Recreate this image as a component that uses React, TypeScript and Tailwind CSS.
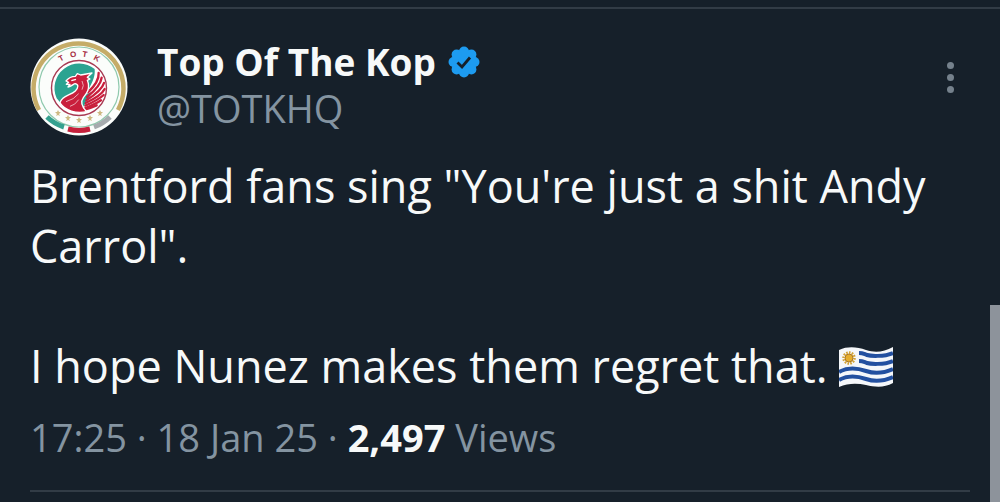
import React from 'react';

const Avatar: React.FC = () => (
  <svg viewBox="0 0 98 98" className="size-[98px] shrink-0" role="img" aria-label="Top Of The Kop">
    <circle cx="49" cy="49" r="48.5" fill="#fbfdfb" />
    {/* gold outer band */}
    <path d="M9 72 A45 45 0 1 1 88 72" fill="none" stroke="#c5ac68" strokeWidth="4.5" />
    <circle cx="49" cy="49" r="40" fill="none" stroke="#8fc9ad" strokeWidth="1.2" />
    {/* lower segments */}
    <path d="M17 79 A44 44 0 0 0 34 89" fill="none" stroke="#35a18f" strokeWidth="5" />
    <path d="M38 91 A44 44 0 0 0 60 91" fill="none" stroke="#c5203b" strokeWidth="5" />
    <path d="M64 89 A44 44 0 0 0 80 79" fill="none" stroke="#a6abae" strokeWidth="5" />
    {/* wordmark */}
    <g fill="#a52a40" fontFamily="Liberation Sans, sans-serif" fontWeight="700" fontSize="8" textAnchor="middle">
      <text x="31" y="23" transform="rotate(-28 31 20)">T</text>
      <text x="43" y="19" transform="rotate(-9 43 16)">O</text>
      <text x="55" y="19" transform="rotate(9 55 16)">T</text>
      <text x="67" y="23" transform="rotate(28 67 20)">K</text>
    </g>
    <circle cx="49" cy="50" r="27.5" fill="#fff" stroke="#a83a53" strokeWidth="1.4" />
    <g transform="scale(.3333) translate(-28 -27)">
      <path d="M108 208 A74 74 0 0 1 222 120 C224 142 216 158 206 176 L196 196 L216 188 L186 236 L120 222 Z" fill="#2ba391" />
      {/* wing feathers */}
      <g fill="none" stroke="#c91f3c" strokeWidth="7" strokeLinecap="round">
        <path d="M234 132 Q236 158 202 190" />
        <path d="M243 146 Q240 172 199 204" />
        <path d="M250 162 Q244 184 197 214" />
        <path d="M252 180 Q242 200 195 222" />
        <path d="M249 198 Q234 212 194 230" />
        <path d="M241 214 Q224 226 194 237" />
        <path d="M228 229 Q212 236 192 242" />
      </g>
      {/* neck, head and crest */}
      <path
        d="M118 222 C122 200 150 200 164 186 C174 176 174 166 164 164 C158 164 154 172 142 174 L148 166 L137 166 L144 160 L136 156 C144 146 152 142 164 142 L170 134 L180 138 L214 132 L200 145 L208 150 L200 154 C210 178 198 194 188 206 C178 220 182 232 198 248 C166 254 134 246 118 222 Z"
        fill="#c91f3c"
        stroke="#fff"
        strokeWidth="4"
        strokeLinejoin="round"
      />
      <path d="M152 155 L166 151" stroke="#fff" strokeWidth="4" />
      <path d="M136 218 Q160 212 174 194 M148 232 Q164 228 174 212 M184 156 Q192 170 184 182" fill="none" stroke="#eba9b4" strokeWidth="3" />
    </g>
    {/* stars */}
    <g fill="#cdb982">
      <path d="M28 72l1 2h2l-2 2 1 2-2-1-2 1 1-2-2-2h2z" />
      <path d="M38 77l1 2h2l-2 2 1 2-2-1-2 1 1-2-2-2h2z" />
      <path d="M49 79l1 2h2l-2 2 1 2-2-1-2 1 1-2-2-2h2z" />
      <path d="M60 77l1 2h2l-2 2 1 2-2-1-2 1 1-2-2-2h2z" />
      <path d="M70 72l1 2h2l-2 2 1 2-2-1-2 1 1-2-2-2h2z" />
    </g>
  </svg>
);

const VerifiedBadge: React.FC = () => (
  <svg viewBox="0 0 32 32" className="size-8 shrink-0" role="img" aria-label="Verified">
    <g fill="#1d9bf0">
      <circle cx="16" cy="16" r="12.5" />
      <circle cx="16" cy="5.5" r="5" />
      <circle cx="23.4" cy="8.6" r="5" />
      <circle cx="26.5" cy="16" r="5" />
      <circle cx="23.4" cy="23.4" r="5" />
      <circle cx="16" cy="26.5" r="5" />
      <circle cx="8.6" cy="23.4" r="5" />
      <circle cx="5.5" cy="16" r="5" />
      <circle cx="8.6" cy="8.6" r="5" />
    </g>
    <path d="M9.5 16.5 L14 21 L22 11.5" fill="none" stroke="#16202a" strokeWidth="2.8" />
  </svg>
);

const UruguayFlag: React.FC = () => (
  <svg viewBox="0 0 54 40" className="inline-block w-[54px] h-10 align-[-4px]" role="img" aria-label="Uruguay">
    <path d="M0 3 C9 -1 18 0 27 3 S45 5 54 0 V36 C45 41 36 40 27 38 S9 36 0 40 Z" fill="#f5f7fa" />
    <g fill="none" stroke="#2350a0" strokeWidth="4">
      <path d="M20 6 C24 6 25 7 28 8 S45 10 54 6" />
      <path d="M20 14 C24 14 25 15 28 16 S45 18 54 14" />
      <path d="M0 25 C9 20 18 21 27 24 S45 26 54 22" />
      <path d="M0 33 C9 28 18 29 27 32 S45 34 54 30" />
    </g>
    <circle cx="10" cy="11" r="5.5" fill="none" stroke="#d3a233" strokeWidth="2.5" strokeDasharray="1.6 1.2" />
    <circle cx="10" cy="11" r="4" fill="#e5ad2d" stroke="#a9792a" strokeWidth="1" />
  </svg>
);

const MoreButton: React.FC = () => (
  <button type="button" aria-label="More" className="flex w-10 shrink-0 flex-col items-center gap-[5px] pt-6">
    <span className="size-[7px] rounded-full bg-[#75818c]" />
    <span className="size-[7px] rounded-full bg-[#75818c]" />
    <span className="size-[7px] rounded-full bg-[#75818c]" />
  </button>
);

const App: React.FC = () => {
  return (
    <div className="flex min-h-screen flex-col bg-[#16202a] font-['Open_Sans','Noto_Sans',sans-serif] text-[#f7f9f9]">
      <div className="flex flex-1 border-t-7 border-[#16202a]">
        <main className="min-w-0 flex-1 -mr-[10px] border-t-2 border-[#323c46]">
          <article className="px-[30px] pt-[29px]">
            <header className="flex items-start">
              <Avatar />
              <div className="ml-[29px] min-w-0 flex-1">
                <div className="flex items-center gap-3">
                  <h1 className="text-[37px] font-bold leading-[48px]">Top Of The Kop</h1>
                  <VerifiedBadge />
                </div>
                <a href="#profile" className="block text-[38px] leading-[44px] text-[#8494a1]">@TOTKHQ</a>
              </div>
              <MoreButton />
            </header>
            <div className="mt-5 text-[45px] leading-[60px]">
              <p>Brentford fans sing "You're just a shit Andy Carrol".</p>
              <p className="mt-[60px]">
                I hope Nunez makes them regret that. <UruguayFlag />
              </p>
            </div>
            <p className="mt-4 border-b-2 border-[#323c46] pb-7 text-[38px] leading-[50px] text-[#8494a1]">
              <time>17:25 · 18 Jan 25</time> · <strong className="font-bold text-[#f7f9f9]">2,497</strong> Views
            </p>
          </article>
        </main>
        {/* scroll thumb */}
        <div className="flex w-[10px] shrink-0 flex-col justify-end">
          <div className="h-[197px] bg-[#8d939b]" />
        </div>
      </div>
    </div>
  );
};

export default App;
